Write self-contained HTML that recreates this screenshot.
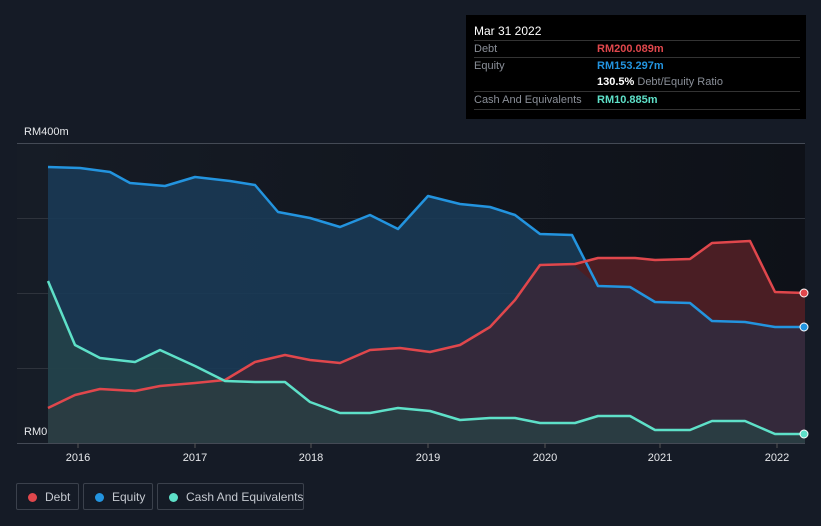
<!DOCTYPE html><html><head><meta charset="utf-8"><style>
html,body{margin:0;width:821px;height:526px;overflow:hidden}
body{background:#151b26;font-family:"Liberation Sans",sans-serif;position:relative}
.tt{position:absolute;left:466px;top:15px;width:340px;height:104px;background:#000;color:#fff;font-size:11px}
.tt .r{position:absolute;left:8px;right:6px;height:17px;border-top:1px solid #333;line-height:17px;color:#8a8f98;white-space:nowrap}
.lg{position:absolute;top:483px;height:27px;border:1px solid #3b414c;border-radius:2px;color:#c5c9d0;font-size:12px;line-height:27px;box-sizing:border-box;white-space:nowrap}
.lg i{position:absolute;left:11px;top:9px;width:9px;height:9px;border-radius:50%}
</style></head><body>
<svg width="821" height="526" style="position:absolute;left:0;top:0">
<defs><linearGradient id="bg" x1="0" x2="1" y1="0" y2="0"><stop offset="0" stop-color="#161c26"/><stop offset="1" stop-color="#0e1118"/></linearGradient></defs>
<rect x="17" y="143" width="788" height="300" fill="url(#bg)"/>
<g stroke="#2e333c" stroke-width="1"><line x1="17" x2="805" y1="143.5" y2="143.5" stroke="#444a55"/><line x1="17" x2="805" y1="218.5" y2="218.5"/><line x1="17" x2="805" y1="293.5" y2="293.5"/><line x1="17" x2="805" y1="368.5" y2="368.5"/><line x1="17" x2="805" y1="443.5" y2="443.5" stroke="#444a55"/></g>
<polygon fill="#1a3a55" opacity="0.9" points="48,443 48,167 80,168 110,172 130,183 165,186 195,177 230,181 255,185 278,212 310,218 340,227 370,215 398,229 428,196 460,204 490,207 515,215 540,234 572,235 598,286 630,287 655,302 690,303 712,321 745,322 775,327 805,327 805,443"/>
<polygon fill="#4a1e24" points="48,443 48,408 75,395 100,389 135,391 160,386 195,383 225,380 255,362 285,355 310,360 340,363 370,350 400,348 430,352 460,345 490,327 515,300 540,265 575,264 598,258 635,258 655,260 690,259 712,243 750,241 775,292 805,293 805,443"/>
<polygon fill="#302c40" opacity="0.85" points="48,408 75,395 100,389 135,391 160,386 195,383 225,380 255,362 285,355 310,360 340,363 370,350 400,348 430,352 460,345 490,327 515,300 540,265 572,264 598,286 630,287 655,302 690,303 712,321 745,322 775,327 805,327 805,443 48,443"/>
<polygon fill="#264446" opacity="0.7" points="48,443 48,281 75,345 100,358 135,362 160,350 195,366 225,381 255,382 285,382 310,402 340,413 370,413 398,408 430,411 460,420 490,418 515,418 540,423 575,423 598,416 630,416 655,430 690,430 712,421 745,421 775,434 805,434 805,443"/>
<g fill="none" stroke-width="2.5" stroke-linejoin="round">
<polyline stroke="#2394df" points="48,167 80,168 110,172 130,183 165,186 195,177 230,181 255,185 278,212 310,218 340,227 370,215 398,229 428,196 460,204 490,207 515,215 540,234 572,235 598,286 630,287 655,302 690,303 712,321 745,322 775,327 805,327"/>
<polyline stroke="#e0474c" points="48,408 75,395 100,389 135,391 160,386 195,383 225,380 255,362 285,355 310,360 340,363 370,350 400,348 430,352 460,345 490,327 515,300 540,265 575,264 598,258 635,258 655,260 690,259 712,243 750,241 775,292 805,293"/>
<polyline stroke="#5ee0c8" points="48,281 75,345 100,358 135,362 160,350 195,366 225,381 255,382 285,382 310,402 340,413 370,413 398,408 430,411 460,420 490,418 515,418 540,423 575,423 598,416 630,416 655,430 690,430 712,421 745,421 775,434 805,434"/>
</g>
<circle cx="804" cy="293" r="4" fill="#e0474c" stroke="#fff" stroke-width="1"/>
<circle cx="804" cy="327" r="4" fill="#2394df" stroke="#fff" stroke-width="1"/>
<circle cx="804" cy="434" r="4" fill="#5ee0c8" stroke="#fff" stroke-width="1"/>
<g stroke="#555" ><line x1="78" x2="78" y1="443" y2="448"/><line x1="195" x2="195" y1="443" y2="448"/><line x1="311" x2="311" y1="443" y2="448"/><line x1="428" x2="428" y1="443" y2="448"/><line x1="545" x2="545" y1="443" y2="448"/><line x1="660" x2="660" y1="443" y2="448"/><line x1="777" x2="777" y1="443" y2="448"/></g>
<g fill="#e6e8eb" font-size="11" text-anchor="middle"><text x="78" y="461">2016</text><text x="195" y="461">2017</text><text x="311" y="461">2018</text><text x="428" y="461">2019</text><text x="545" y="461">2020</text><text x="660" y="461">2021</text><text x="777" y="461">2022</text></g>
<text x="24" y="135" fill="#e6e8eb" font-size="11">RM400m</text>
<text x="24" y="435" fill="#e6e8eb" font-size="11">RM0</text>
</svg>
<div class="tt">
<div style="position:absolute;left:8px;top:9px;font-size:12px">Mar 31 2022</div>
<div class="r" style="top:25px">Debt<span style="position:absolute;left:123px;color:#e0474c;font-weight:bold">RM200.089m</span></div>
<div class="r" style="top:42px">Equity<span style="position:absolute;left:123px;color:#2394df;font-weight:bold">RM153.297m</span></div>
<div class="r" style="top:59px;border-top:none"><span style="position:absolute;left:123px"><b style="color:#fff">130.5%</b> Debt/Equity Ratio</span></div>
<div class="r" style="top:76px">Cash And Equivalents<span style="position:absolute;left:123px;color:#5ee0c8;font-weight:bold">RM10.885m</span></div>
<div style="position:absolute;left:8px;right:6px;top:94px;border-top:1px solid #333"></div>
</div>
<div class="lg" style="left:16px;width:63px"><i style="background:#e0474c"></i><span style="position:absolute;left:28px">Debt</span></div>
<div class="lg" style="left:83px;width:70px"><i style="background:#2394df"></i><span style="position:absolute;left:28px">Equity</span></div>
<div class="lg" style="left:157px;width:147px"><i style="background:#5ee0c8"></i><span style="position:absolute;left:28px">Cash And Equivalents</span></div>
</body></html>
